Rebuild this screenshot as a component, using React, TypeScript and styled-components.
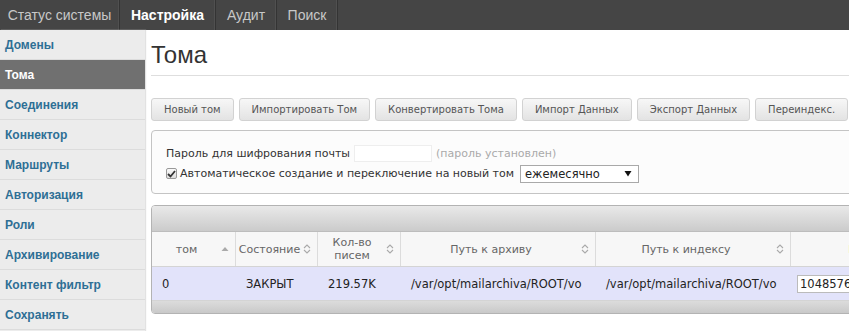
import React from "react";
import styled, { createGlobalStyle } from "styled-components";

const Global = createGlobalStyle`
  html, body { margin: 0; padding: 0; background: #fff; overflow: hidden; }
  body { font-family: "Liberation Sans", Arial, sans-serif; width: 849px; height: 331px; }
`;

const Page = styled.div`
  width: 849px;
  height: 331px;
  display: flex;
  flex-direction: column;
  overflow: hidden;
`;

const TopNav = styled.nav`
  height: 30px;
  background: #454545;
  display: flex;
  flex-shrink: 0;
`;

const Tab = styled.div<{ $active?: boolean; $w: number }>`
  width: ${(p) => p.$w}px;
  box-sizing: border-box;
  display: flex;
  align-items: center;
  justify-content: center;
  font-size: 14px;
  color: ${(p) => (p.$active ? "#fff" : "#c8c8c8")};
  font-weight: ${(p) => (p.$active ? "bold" : "normal")};
  border-right: 1px solid #343434;
  box-shadow: inset -1px 0 0 #505050;
`;

const Body = styled.div`
  flex: 1;
  display: flex;
  min-height: 0;
`;

const Sidebar = styled.aside`
  width: 145px;
  flex-shrink: 0;
  background: #ececec;
  display: flex;
  flex-direction: column;
  box-shadow: 1px 0 1px #e2e2e2;
`;

const SideItem = styled.div<{ $active?: boolean }>`
  height: 30px;
  box-sizing: border-box;
  border-bottom: 1px solid #dcdcdc;
  display: flex;
  align-items: center;
  padding-left: 5px;
  font-size: 12px;
  font-weight: bold;
  color: ${(p) => (p.$active ? "#fff" : "#2e6f95")};
  background: ${(p) => (p.$active ? "#707070" : "transparent")};
`;

const Main = styled.main`
  flex: 1;
  min-width: 0;
  padding-left: 6px;
  overflow: hidden;
  font-family: "DejaVu Sans", Verdana, sans-serif;
`;

const Title = styled.h1`
  margin: 0;
  padding-top: 10px;
  height: 35px;
  font-family: "Liberation Sans", Arial, sans-serif;
  font-weight: normal;
  font-size: 24px;
  line-height: 30px;
  color: #333;
  border-bottom: 1px solid #dedede;
  width: 1000px;
`;

const Toolbar = styled.div`
  display: flex;
  gap: 5px;
  margin-top: 22px;
  white-space: nowrap;
`;

const Btn = styled.div`
  height: 23px;
  box-sizing: border-box;
  padding: 0 12px;
  display: flex;
  align-items: center;
  font-size: 10px;
  color: #555;
  border: 1px solid #d2d2d2;
  border-radius: 3px;
  background: linear-gradient(#f7f7f7, #e3e3e3);
  flex-shrink: 0;
`;

const Panel = styled.div`
  margin-top: 9px;
  width: 900px;
  height: 64px;
  box-sizing: border-box;
  border: 1px solid #c4c4c4;
  border-radius: 4px;
  background: #fcfcfc;
  padding: 14px 0 0 14px;
  font-size: 11px;
  color: #333;
  display: flex;
  flex-direction: column;
  gap: 3px;
`;

const Line = styled.div`
  display: flex;
  align-items: center;
  height: 17px;
  white-space: nowrap;
`;

const PwInput = styled.div`
  width: 76px;
  height: 15px;
  margin: 0 4px;
  border: 1px solid #eee;
  background: #fff;
`;

const Hint = styled.span`
  color: #aaa;
`;

const Check = styled.span`
  width: 11px;
  height: 11px;
  box-sizing: border-box;
  border: 1px solid #999;
  border-radius: 2px;
  background: linear-gradient(#fafafa, #ddd);
  margin-right: 3px;
  display: flex;
  align-items: center;
  justify-content: center;
`;

const Select = styled.div`
  margin-left: 6px;
  width: 119px;
  height: 18px;
  box-sizing: border-box;
  border: 1px solid #a9a9a9;
  background: #fff;
  display: flex;
  align-items: center;
  justify-content: space-between;
  padding: 0 6px 0 4px;
  font-size: 11.5px;
  color: #222;
`;

const Grid = styled.div`
  margin-top: 11px;
  width: 900px;
  box-sizing: border-box;
  border: 1px solid #b3b3b3;
  border-radius: 4px;
  overflow: hidden;
`;

const GridTop = styled.div`
  height: 25px;
  background: linear-gradient(#e9e9e9, #cbcbcb);
  border-bottom: 1px solid #bdbdbd;
`;

const Row = styled.div<{ $head?: boolean }>`
  display: grid;
  grid-template-columns: 84px 82px 83px 195px 195px 207px;
  height: ${(p) => (p.$head ? 34 : 33)}px;
  background: ${(p) => (p.$head ? "#f7f7f7" : "#e2e3fa")};
  border-bottom: 1px solid #d4d4d4;
`;

const HCell = styled.div<{ $red?: boolean }>`
  display: flex;
  align-items: center;
  justify-content: center;
  position: relative;
  padding-right: 14px;
  border-right: 1px solid #dcdcdc;
  font-size: 11px;
  line-height: 13px;
  text-align: center;
  color: ${(p) => (p.$red ? "#c0392b" : "#666")};
`;

const SortIcon = styled.span`
  position: absolute;
  right: 6px;
  top: 50%;
  transform: translateY(-50%);
  display: flex;
`;

const Cell = styled.div`
  display: flex;
  align-items: center;
  padding-left: 10px;
  font-size: 11.5px;
  color: #222;
  white-space: nowrap;
  overflow: hidden;
`;

const SizeInput = styled.div`
  margin-left: -4px;
  height: 16px;
  width: 80px;
  border: 1px solid #bbb;
  background: #fff;
  display: flex;
  align-items: center;
  padding-left: 2px;
  font-size: 11.5px;
`;

const GridFoot = styled.div`
  height: 12px;
  background: linear-gradient(#dcdcdc, #c9c9c9);
`;

const Both = () => (
  <svg width="8" height="11" viewBox="0 0 8 11">
    <path d="M1 4.5 L4 1.5 L7 4.5" fill="none" stroke="#aaa" strokeWidth="1.1" />
    <path d="M1 6.5 L4 9.5 L7 6.5" fill="none" stroke="#aaa" strokeWidth="1.1" />
  </svg>
);

const Up = () => (
  <svg width="8" height="6" viewBox="0 0 8 6">
    <path d="M0.5 5 L4 1 L7.5 5 Z" fill="#aaa" />
  </svg>
);

const tabs = [
  { t: "Статус системы", w: 120 },
  { t: "Настройка", w: 96, a: true },
  { t: "Аудит", w: 61 },
  { t: "Поиск", w: 61 },
];

const side = [
  "Домены",
  "Тома",
  "Соединения",
  "Коннектор",
  "Маршруты",
  "Авторизация",
  "Роли",
  "Архивирование",
  "Контент фильтр",
  "Сохранять",
];

const buttons = [
  "Новый том",
  "Импортировать Том",
  "Конвертировать Тома",
  "Импорт Данных",
  "Экспорт Данных",
  "Переиндекс.",
];

export default function App() {
  return (
    <Page>
      <Global />
      <TopNav>
        {tabs.map((t) => (
          <Tab key={t.t} $w={t.w} $active={t.a}>
            {t.t}
          </Tab>
        ))}
      </TopNav>
      <Body>
        <Sidebar>
          {side.map((s) => (
            <SideItem key={s} $active={s === "Тома"}>
              {s}
            </SideItem>
          ))}
        </Sidebar>
        <Main>
          <Title>Тома</Title>
          <Toolbar>
            {buttons.map((b) => (
              <Btn key={b}>{b}</Btn>
            ))}
          </Toolbar>
          <Panel>
            <Line>
              Пароль для шифрования почты
              <PwInput />
              <Hint>(пароль установлен)</Hint>
            </Line>
            <Line>
              <Check>
                <svg width="9" height="8" viewBox="0 0 9 8">
                  <path d="M1 4 L3.5 6.5 L8 1" fill="none" stroke="#333" strokeWidth="1.8" />
                </svg>
              </Check>
              Автоматическое создание и переключение на новый том
              <Select>
                ежемесячно
                <svg width="8" height="7" viewBox="0 0 8 7">
                  <path d="M0.5 1 L7.5 1 L4 6.5 Z" fill="#111" />
                </svg>
              </Select>
            </Line>
          </Panel>
          <Grid>
            <GridTop />
            <Row $head>
              <HCell>
                том
                <SortIcon>
                  <Up />
                </SortIcon>
              </HCell>
              <HCell>
                Состояние
                <SortIcon>
                  <Both />
                </SortIcon>
              </HCell>
              <HCell>
                Кол-во
                <br />
                писем
                <SortIcon>
                  <Both />
                </SortIcon>
              </HCell>
              <HCell>
                Путь к архиву
                <SortIcon>
                  <Both />
                </SortIcon>
              </HCell>
              <HCell>
                Путь к индексу
                <SortIcon>
                  <Both />
                </SortIcon>
              </HCell>
              <HCell $red>Макс. размер</HCell>
            </Row>
            <Row>
              <Cell>0</Cell>
              <Cell>ЗАКРЫТ</Cell>
              <Cell>219.57K</Cell>
              <Cell>/var/opt/mailarchiva/ROOT/vo</Cell>
              <Cell>/var/opt/mailarchiva/ROOT/vo</Cell>
              <Cell>
                <SizeInput>1048576</SizeInput>
              </Cell>
            </Row>
            <GridFoot />
          </Grid>
        </Main>
      </Body>
    </Page>
  );
}
